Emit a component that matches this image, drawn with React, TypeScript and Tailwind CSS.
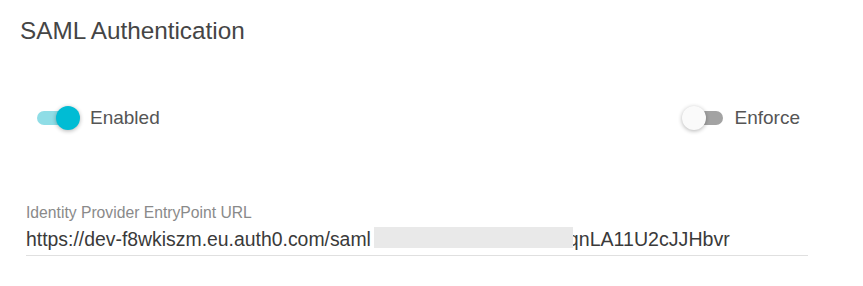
import { useState } from 'react';

function Toggle({ on, onChange }: { on: boolean; onChange: () => void }) {
  return (
    <button type="button" onClick={onChange} className="relative w-[44px] h-[24px] shrink-0">
      <span
        className={`absolute left-[1px] top-[5px] w-[40px] h-[14px] rounded-full ${
          on ? 'bg-[#8fdde6]' : 'bg-[#a3a3a3]'
        }`}
      />
      <span
        className={`absolute top-0 w-[24px] h-[24px] rounded-full shadow-[0_1px_4px_rgba(0,0,0,0.3)] ${
          on ? 'right-0 bg-[#00bcd4]' : 'left-0 bg-[#fafafa]'
        }`}
      />
    </button>
  );
}

export default function App() {
  const [enabled, setEnabled] = useState(true);
  const [enforce, setEnforce] = useState(false);

  return (
    <div className="min-h-screen bg-white px-5 pt-[17px] font-['Liberation_Sans',Arial,sans-serif]">
      <h1 className="text-[24.3px] leading-[28px] text-[#454545]">SAML Authentication</h1>

      <div className="mt-[61px] ml-4 mr-[43px] flex items-center justify-between">
        <div className="flex items-center gap-[10px]">
          <Toggle on={enabled} onChange={() => setEnabled(!enabled)} />
          <span className="text-[19px] leading-[24px] text-[#555]">Enabled</span>
        </div>
        <div className="flex items-center gap-[9px]">
          <Toggle on={enforce} onChange={() => setEnforce(!enforce)} />
          <span className="text-[19px] leading-[24px] text-[#555]">Enforce</span>
        </div>
      </div>

      <div className="mt-[74px] ml-[6px] w-[782px]">
        <label className="block text-[15.7px] leading-[18px] text-[#8a8a8a]">
          Identity Provider EntryPoint URL
        </label>
        <div className="mt-[5px] pb-[4px] border-b border-[#e0e0e0] whitespace-nowrap text-[19.4px] leading-[24px] text-[#3a3a3a]">
          <span>https://dev-f8wkiszm.eu.auth0.com/saml</span>
          <span className="relative z-10 inline-block align-top ml-[3px] w-[199px] h-[21px] bg-[#e9e9e9]" />
          <span className="-ml-[5px] text-[19.6px]">qnLA11U2cJJHbvr</span>
        </div>
      </div>
    </div>
  );
}
